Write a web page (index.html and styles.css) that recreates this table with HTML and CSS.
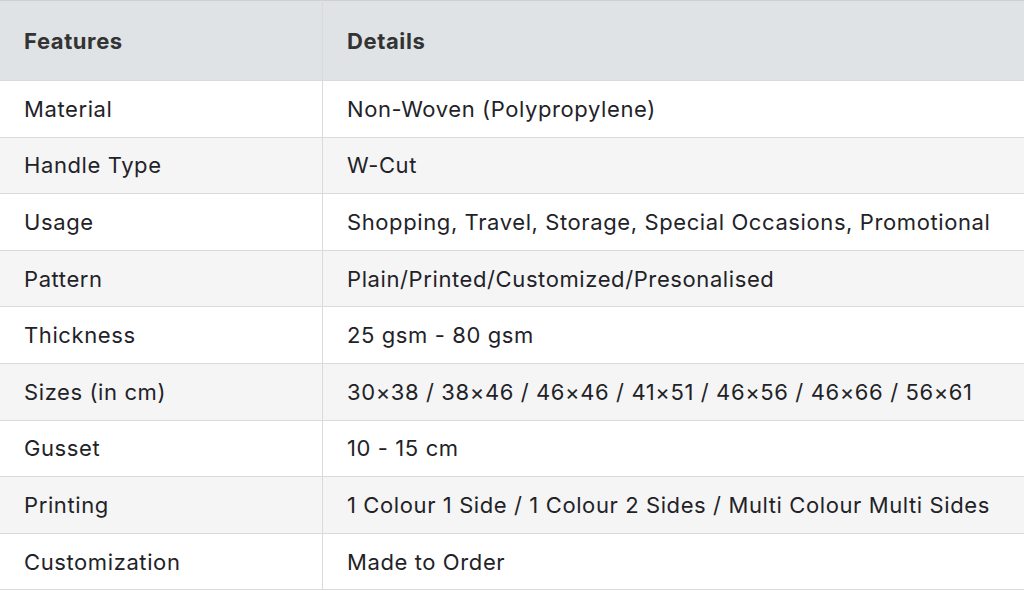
FILE: index.html
```html
<!DOCTYPE html>
<html lang="en">

<head>
    <meta charset="UTF-8">
    <title>Bag Specifications</title>
    <link rel="stylesheet" href="styles.css">
</head>

<body>
    <table class="spec-table">
        <thead>
            <tr>
                <th class="col-feature">Features</th>
                <th>Details</th>
            </tr>
        </thead>
        <tbody>
            <tr>
                <td>Material</td>
                <td>Non-Woven (Polypropylene)</td>
            </tr>
            <tr>
                <td>Handle Type</td>
                <td>W-Cut</td>
            </tr>
            <tr>
                <td>Usage</td>
                <td>Shopping, Travel, Storage, Special Occasions, Promotional</td>
            </tr>
            <tr>
                <td>Pattern</td>
                <td>Plain/Printed/Customized/Presonalised</td>
            </tr>
            <tr>
                <td>Thickness</td>
                <td>25 gsm - 80 gsm</td>
            </tr>
            <tr>
                <td>Sizes (in cm)</td>
                <td>30×38 / 38×46 / 46×46 / 41×51 / 46×56 / 46×66 / 56×61</td>
            </tr>
            <tr>
                <td>Gusset</td>
                <td>10 - 15 cm</td>
            </tr>
            <tr>
                <td>Printing</td>
                <td>1 Colour 1 Side / 1 Colour 2 Sides / Multi Colour Multi Sides</td>
            </tr>
            <tr>
                <td>Customization</td>
                <td>Made to Order</td>
            </tr>
        </tbody>
    </table>
</body>

</html>
```

FILE: styles.css
```css
body {
    margin: 0;
    font-family: Inter, "Liberation Sans", sans-serif;
    background: #fff;
    overflow: hidden;
}

/* spec table */
.spec-table {
    width: 100%;
    border-collapse: collapse;
    font-size: 22px;
    letter-spacing: 0.6px;
    color: #1f2328;
}

.spec-table th,
.spec-table td {
    text-align: left;
    padding: 0 24px;
    border: 1px solid #dadada;
    white-space: nowrap;
}

.spec-table th:first-child,
.spec-table td:first-child {
    border-left: none;
}

.spec-table th:last-child,
.spec-table td:last-child {
    border-right: none;
}

.spec-table th {
    height: 79px;
    background: #dfe3e6;
    color: #333;
    font-weight: 700;
    border-top-color: #cfcfcf;
}

.col-feature {
    width: 274px;
}

.spec-table td {
    height: 55.6px;
}

.spec-table tbody tr:nth-child(even) td {
    background: #f5f5f5;
}
```
